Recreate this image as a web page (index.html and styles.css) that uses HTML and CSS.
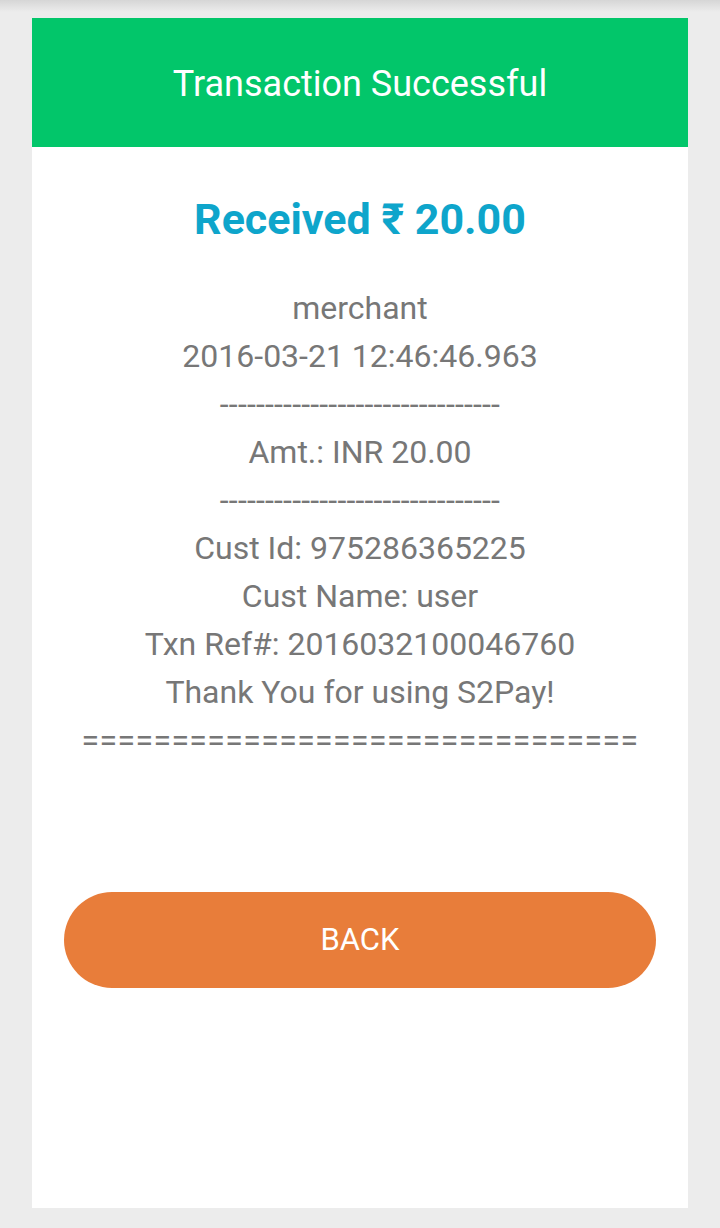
FILE: index.html
```html
<!DOCTYPE html>
<html lang="en">

<head>
    <meta charset="UTF-8">
    <meta name="viewport" content="width=device-width, initial-scale=1.0">
    <title>Transaction Successful</title>
    <link rel="stylesheet" href="styles.css">
</head>

<body>
    <div class="card">

        <!-- 标题 -->
        <div class="header">Transaction Successful</div>

        <!-- 金额 -->
        <div class="amount">Received ₹ 20.00</div>

        <!-- 收据 -->
        <ul class="receipt">
            <li>merchant</li>
            <li>2016-03-21 12:46:46.963</li>
            <li class="rule">-------------------------------</li>
            <li>Amt.: INR 20.00</li>
            <li class="rule">-------------------------------</li>
            <li>Cust Id: 975286365225</li>
            <li>Cust Name: user</li>
            <li>Txn Ref#: 2016032100046760</li>
            <li>Thank You for using S2Pay!</li>
            <li class="rule-double">===============================</li>
        </ul>

        <div class="back">BACK</div>
    </div>
</body>

</html>
```

FILE: styles.css
```css
body,
ul,
li {
    margin: 0;
    padding: 0;
}

li {
    list-style: none;
}

body {
    font-family: Roboto, "Liberation Sans", sans-serif;
    background: linear-gradient(#d6d6d6, #ececec 12px) no-repeat, #ececec;
    height: 1228px;
    overflow: hidden;
}

.card {
    margin: 18px 32px 0;
    height: 1190px;
    background-color: #fff;
    text-align: center;
}

.header {
    display: flex;
    align-items: center;
    justify-content: center;
    height: 129px;
    padding-top: 3px;
    box-sizing: border-box;
    color: #fff;
    font-size: 36px;
    background-color: #02c66a;
}

.amount {
    margin-top: 44px;
    height: 56px;
    line-height: 56px;
    font-size: 43px;
    font-weight: bold;
    color: #0ea5cb;
}

.receipt {
    margin-top: 37px;
    color: #777;
    font-size: 32px;
    line-height: 48px;
}

.rule {
    letter-spacing: 0.2px;
}

.rule-double {
    letter-spacing: 0.4px;
}

.back {
    margin: 128px 32px 0;
    height: 96px;
    line-height: 96px;
    border-radius: 48px;
    color: #fff;
    font-size: 31px;
    background-color: #e87d3a;
    cursor: pointer;
}
```
